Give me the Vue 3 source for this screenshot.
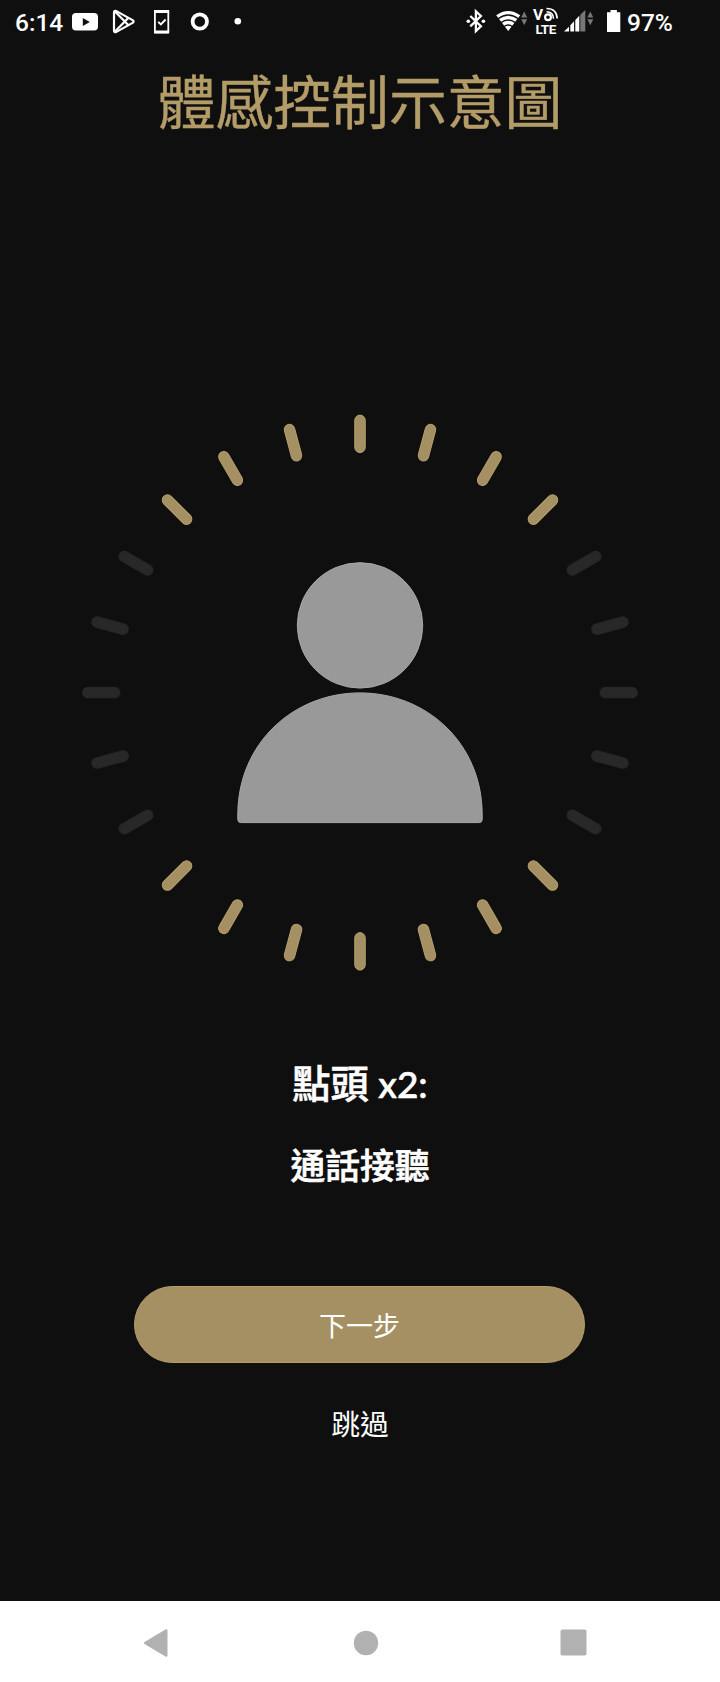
<template>
  <div class="screen">
    <header class="status-bar">
      <span class="time">6:14</span>
      <svg class="status-left" viewBox="68 0 182 45" width="182" height="45">
        <rect x="72" y="13" width="26" height="17.5" rx="4" fill="#fff" />
        <path d="M82.8 18v8l7-4z" fill="#0f0f0f" />
        <g fill="none" stroke="#fff" stroke-width="2.2" stroke-linejoin="round">
          <path d="M114 12.5q0-2.5 2.4-1.4l16.2 9q2 1.4 0 2.8l-16.2 9q-2.4 1-2.4-1.4z" />
          <path d="M115 11.5l13.5 13.8M115 31.5l13.5-13.8" />
        </g>
        <rect x="154.9" y="11" width="13.4" height="21.4" rx="1" fill="none" stroke="#fff" stroke-width="1.8" />
        <path d="M154 10h15.2v3H154zM154 30.6h15.2v2.8H154z" fill="#fff" />
        <path d="M158.2 21.8l2.7 2.7 4.7-5" fill="none" stroke="#fff" stroke-width="1.9" />
        <circle cx="199.8" cy="21.5" r="7.2" fill="none" stroke="#fff" stroke-width="3.8" />
        <circle cx="237.8" cy="21.2" r="3.3" fill="#fff" />
      </svg>
      <svg class="status-right" viewBox="460 0 164 45" width="164" height="45">
        <path d="M470.3 16l10.6 10.3-5 4.8V11.3l5 4.7-10.6 10.4" fill="none" stroke="#fff" stroke-width="2.3" />
        <circle cx="468.3" cy="21.3" r="1.8" fill="#fff" />
        <circle cx="483.4" cy="21.3" r="1.8" fill="#fff" />
        <path d="M496.2 15.3q12-8.8 24 0L508.2 31z" fill="#fff" />
        <path d="M498 18.7q10.2-7.4 20.4 0M501 22.6q7.2-5.2 14.4 0M504 26.5q4.2-3 8.4 0" fill="none" stroke="#0f0f0f" stroke-width="1.3" />
        <path d="M521.2 17.6l3-6 3 6zM521.2 19.2h6l-3 6z" fill="#777" />
        <text x="533" y="19.6" class="volte vo">V</text>
        <text x="535.4" y="33.8" class="volte" textLength="21">LTE</text>
        <g fill="none" stroke="#fff">
          <circle cx="548" cy="17.2" r="2.9" stroke-width="2.2" />
          <path d="M546.500 11.800q6.800 0 7 7M546.500 8.500q10.200 0 10.700 10" stroke-width="1.600" />
        </g>
        <path d="M564 31.500l5-4.800v4.800zM570.300 31.500v-6.300l3.800-3.900v10.200zM575.300 31.500V20l4-4.200v15.700z" fill="#fff" />
        <path d="M580.300 31.500V14.800l5-4.800v21.500z" fill="#777" />
        <path d="M587.300 17.600l3-6 3 6zM587.300 19.200h6l-3 6z" fill="#777" />
        <path d="M607 12.200h3.500V10h6.400v2.200h3.400V32H607z" fill="#fff" />
      </svg>
      <span class="battery">97%</span>
    </header>

    <main class="content">
      <h1 class="title">體感控制示意圖</h1>

      <svg class="gesture" viewBox="-280 -279.600 560 560" width="560" height="560">
        <rect
          v-for="tick in ticks"
          :key="tick.angle"
          :class="['tick', { active: tick.active }]"
          x="-5.25"
          y="-277.5"
          width="10.5"
          height="37.5"
          rx="5.25"
          :transform="`rotate(${tick.angle})`"
        />
        <circle class="person" cx="0" cy="-67.200" r="62.700" />
        <path class="person" d="M-122.200 122.500C-122.200 50-66 .3 0 .3S122.200 50 122.200 122.500V127q0 3-3 3h-238.400q-3 0-3-3z" />
      </svg>

      <p class="gesture-name">點頭 <span class="latin">x2:</span></p>
      <p class="gesture-action">通話接聽</p>

      <button class="next-btn">下一步</button>
      <button class="skip-btn">跳過</button>
    </main>

    <nav class="nav-bar">
      <svg width="26" height="30" viewBox="0 0 26 30">
        <path d="M1.500 14L22.500 1.500q2-1 2 1v25q0 2-2 1L1.500 16q-1.500-1 0-2z" fill="#b1b1b1" />
      </svg>
      <svg class="home" width="26" height="26" viewBox="0 0 26 26">
        <circle cx="13" cy="13" r="12.200" fill="#b1b1b1" />
      </svg>
      <svg width="27" height="27" viewBox="0 0 27 27">
        <rect x=".5" y=".5" width="26" height="26" rx="2" fill="#b1b1b1" />
      </svg>
    </nav>
  </div>
</template>

<script setup>
// 24 ticks, 15 degrees apart; the top and bottom arcs light up for a nod
const ticks = Array.from({ length: 24 }, (_, i) => {
  const angle = i * 15;
  const fromVertical = Math.min(angle % 180, 180 - (angle % 180));
  return { angle, active: fromVertical <= 45 };
});
</script>

<style>
body {
  margin: 0;
  background-color: #0f0f0f;
}
</style>

<style scoped>
.screen {
  width: 720px;
  height: 1682px;
  display: flex;
  flex-direction: column;
  background-color: #0f0f0f;
  color: #fff;
  font-family: "Noto Sans CJK TC", sans-serif;
  overflow: hidden;
}

.status-bar {
  height: 45px;
  flex-shrink: 0;
  display: flex;
  align-items: center;
  padding-left: 15px;
  font-family: Roboto, sans-serif;
  font-size: 24.5px;
  font-weight: 500;
  line-height: 46px;
}

.time {
  width: 53px;
}

.status-right {
  margin-left: 210px;
}

.battery {
  margin-left: 3px;
}

.volte {
  font-family: Roboto, sans-serif;
  font-size: 13.5px;
  font-weight: 700;
  fill: #fff;
}

.vo {
  font-size: 15.5px;
}

.content {
  flex: 1;
  display: flex;
  flex-direction: column;
  align-items: center;
}

.title {
  margin: 14px 0 0;
  height: 80px;
  line-height: 80px;
  font-size: 57.8px;
  font-weight: 400;
  color: #b39c68;
  -webkit-text-stroke: 0.4px #b39c68;
}

.gesture {
  margin-top: 274px;
  flex-shrink: 0;
}

.tick {
  fill: #282828;
  stroke: #282828;
  stroke-width: 1;
}

.tick.active {
  fill: #a59064;
  stroke: #b69e69;
}

.person {
  fill: #999;
  stroke: #a9a9a9;
  stroke-width: 1;
}

.gesture-name,
.gesture-action {
  margin: 0;
  height: 50px;
  line-height: 50px;
  font-weight: 500;
  -webkit-text-stroke: 0.6px #fff;
}

.gesture-name {
  margin-top: 84px;
  font-size: 38.2px;
}

.latin {
  margin-left: 1px;
  font-family: Lato, sans-serif;
  font-size: 37px;
}

.gesture-action {
  margin-top: 32px;
  font-size: 34.8px;
}

.next-btn,
.skip-btn {
  border: none;
  padding: 0;
  font-family: inherit;
  color: #fff;
  cursor: pointer;
}

.next-btn {
  box-sizing: border-box;
  width: 451px;
  height: 77px;
  margin-top: 97px;
  margin-right: 1px;
  border: 1px solid #b69e69;
  border-radius: 39px;
  background-color: #a59064;
  font-size: 27px;
}

.skip-btn {
  margin-top: 38px;
  height: 44px;
  line-height: 44px;
  background: none;
  font-size: 28.8px;
}

.nav-bar {
  height: 81px;
  flex-shrink: 0;
  box-sizing: border-box;
  display: flex;
  align-items: center;
  justify-content: space-between;
  padding: 2px 133px 0 143px;
  background-color: #fff;
}

.home {
  margin-left: 2px;
}
</style>
